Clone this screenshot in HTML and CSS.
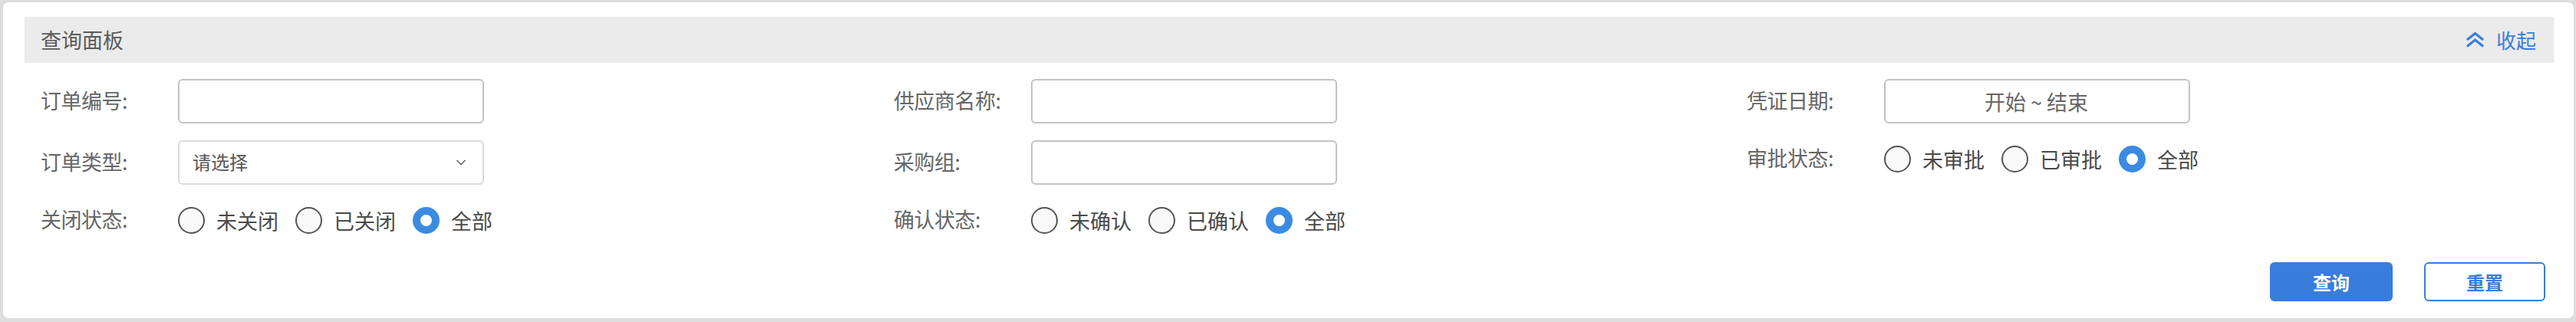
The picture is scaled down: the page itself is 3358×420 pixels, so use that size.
FILE: index.html
```html
<!DOCTYPE html>
<html lang="zh-CN">
<head>
<meta charset="utf-8">
<title>查询面板</title>
<link rel="stylesheet" href="styles.css">
</head>
<body>
<div class="panel">
  <div class="panel-head">
    <span class="panel-title">查询面板</span>
    <a class="collapse">
      <svg class="collapse-icon" width="25" height="21" viewBox="0 0 25 21"><polyline points="2,11 12.5,2.5 23,11" fill="none" stroke="#3a7ddb" stroke-width="3.2" stroke-linejoin="miter"/><polyline points="2,19.5 12.5,11 23,19.5" fill="none" stroke="#3a7ddb" stroke-width="3.2" stroke-linejoin="miter"/></svg>
      <span>收起</span>
    </a>
  </div>
  <div class="form">
    <div class="item">
      <span class="label">订单编号:</span>
      <div class="input"></div>
    </div>
    <div class="item">
      <span class="label">供应商名称:</span>
      <div class="input"></div>
    </div>
    <div class="item">
      <span class="label">凭证日期:</span>
      <div class="input date">开始 ~ 结束</div>
    </div>

    <div class="item">
      <span class="label">订单类型:</span>
      <div class="input select">
        <span>请选择</span>
        <svg width="14" height="10" viewBox="0 0 14 10"><polyline points="1.5,2 7,7.5 12.5,2" fill="none" stroke="#666" stroke-width="1.6"/></svg>
      </div>
    </div>
    <div class="item">
      <span class="label">采购组:</span>
      <div class="input"></div>
    </div>
    <div class="item radio-item">
      <span class="label">审批状态:</span>
      <div class="radios">
        <span class="radio"><i class="dot"></i>未审批</span>
        <span class="radio"><i class="dot"></i>已审批</span>
        <span class="radio"><i class="dot on"></i>全部</span>
      </div>
    </div>

    <div class="item radio-item">
      <span class="label">关闭状态:</span>
      <div class="radios">
        <span class="radio"><i class="dot"></i>未关闭</span>
        <span class="radio"><i class="dot"></i>已关闭</span>
        <span class="radio"><i class="dot on"></i>全部</span>
      </div>
    </div>
    <div class="item radio-item">
      <span class="label">确认状态:</span>
      <div class="radios">
        <span class="radio"><i class="dot"></i>未确认</span>
        <span class="radio"><i class="dot"></i>已确认</span>
        <span class="radio"><i class="dot on"></i>全部</span>
      </div>
    </div>
  </div>
  <div class="actions">
    <button class="btn primary">查询</button>
    <button class="btn ghost">重置</button>
  </div>
</div>
</body>
</html>
```
FILE: styles.css
```css
* { box-sizing: border-box; }
html, body { margin: 0; height: 420px; }
body {
  background: #dedede;
  padding: 2px 2px 4px 3px;
  font-family: "Noto Sans CJK SC", "Noto Sans", sans-serif;
  overflow: hidden;
}
.panel {
  height: 414px;
  background: #fff;
  border: 1px solid #dcdcdc;
  border-radius: 8px;
  display: flex;
  flex-direction: column;
}
.panel-head {
  margin: 19px 26px 0 28px;
  height: 60px;
  background: #ebebeb;
  display: flex;
  align-items: center;
  justify-content: space-between;
  padding: 0 23px 0 21px;
}
.panel-title {
  font-size: 27px;
  color: #5a5a5a;
  line-height: 1;
  margin-top: -2px;
}
.collapse {
  display: flex;
  align-items: center;
  gap: 15px;
  color: #3a7ddb;
  font-size: 26px;
  line-height: 1;
}
.collapse-icon { margin-top: -2px; }
.form {
  margin-top: 21px;
  padding-left: 49px;
  display: grid;
  grid-template-columns: 1112px 1112px 1fr;
  grid-template-rows: 58px 58px 48px;
  row-gap: 22px;
  align-items: start;
}
.item {
  display: flex;
  align-items: center;
  height: 58px;
}
.radio-item { height: 48px; }
.label {
  width: 179px;
  flex: none;
  font-size: 27px;
  color: #666;
  line-height: 1;
  margin-top: -4px;
  letter-spacing: -0.5px;
}
.input {
  width: 399px;
  height: 58px;
  border: 2px solid #c2c2c2;
  border-radius: 6px;
  background: #fff;
}
.date {
  display: flex;
  align-items: center;
  justify-content: center;
  font-size: 27px;
  color: #666;
  padding-right: 2px;
}
.select {
  border-color: #dadada;
  display: flex;
  align-items: center;
  justify-content: space-between;
  padding: 0 21px 0 17px;
  font-size: 24px;
  color: #555;
}
.select span { margin-top: -3px; }
.radios {
  display: flex;
  align-items: center;
  gap: 22px;
}
.radio {
  display: flex;
  align-items: center;
  gap: 15px;
  font-size: 27px;
  color: #4a4a4a;
  line-height: 1;
}
.dot {
  width: 35px;
  height: 35px;
  border-radius: 50%;
  border: 2px solid #555;
  background: #f9f9f9;
  flex: none;
}
.dot.on {
  border: 10px solid #3b8be2;
  background: #fff;
}
.actions {
  margin-top: 31px;
  display: flex;
  justify-content: flex-end;
  gap: 41px;
  padding-right: 37px;
}
.btn {
  height: 51px;
  border-radius: 6px;
  font-family: "Noto Sans CJK SC", "Noto Sans", sans-serif;
  font-size: 24px;
  font-weight: 700;
  line-height: 1;
  padding: 0;
}
.primary {
  width: 160px;
  background: #387ddb;
  border: none;
  color: #fff;
}
.ghost {
  width: 158px;
  background: #fff;
  border: 2px solid #387ddb;
  color: #387ddb;
}
```
